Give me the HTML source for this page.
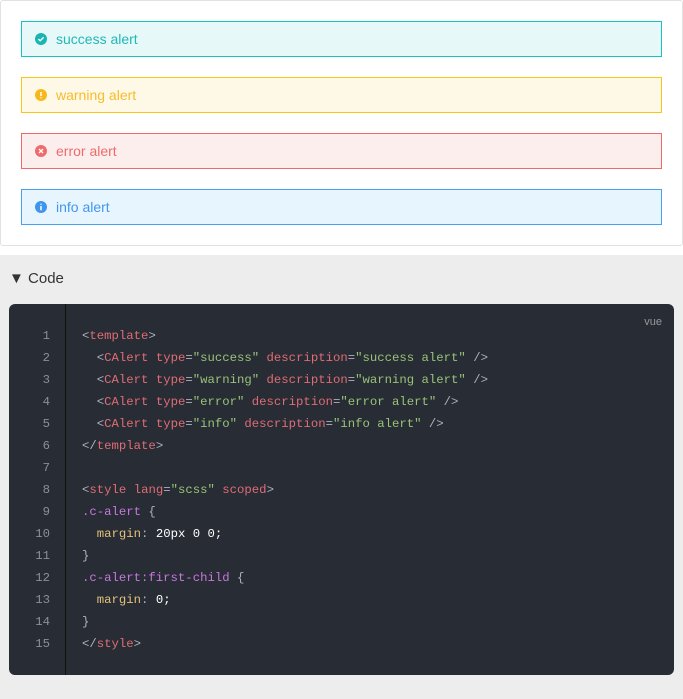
<!DOCTYPE html>
<html><head><meta charset="utf-8"><style>
*{box-sizing:border-box;margin:0;padding:0}
body{width:683px;height:699px;background:#fff;font-family:"Liberation Sans",sans-serif;overflow:hidden;position:relative}
.demo{position:absolute;left:0;top:0;width:683px;height:246px;border:1px solid #e2e2e2;border-radius:3px;background:#fff}
.al{position:absolute;left:20px;width:641px;height:36px;border:1px solid;font-size:14px;line-height:34px;padding-left:34px}
.al svg{position:absolute;left:13px;top:11px}
.gray{position:absolute;left:0;top:255px;width:683px;height:444px;background:#ededed}
.sum{position:absolute;left:9px;top:270px;font-size:15px;color:#333}
.code{position:absolute;left:9px;top:304px;width:665px;height:371px;background:#282c34;border-radius:6px}
.gut{position:absolute;left:56px;top:0;width:1px;height:371px;background:#111}
.ln{position:absolute;left:0;width:41px;top:21px;text-align:right;font-family:"Liberation Mono",monospace;font-size:12.3px;line-height:22px;color:#8a8f98}
pre{position:absolute;left:73px;top:21px;font-family:"Liberation Mono",monospace;font-size:12.3px;line-height:22px;color:#abb2bf}
.r{color:#e06c75}.g{color:#98c379}.p{color:#c678dd}.y{color:#e5c07b}.w{color:#fff}
.vue{position:absolute;right:12px;top:12px;font-size:11px;color:#999}
</style></head><body>
<div class="demo">
<div class="al" style="top:20px;border-color:#19c2c2;background:#e6f8f8;color:#22b8b8"><svg width="12" height="12" viewBox="0 0 12 12"><circle cx="6" cy="6" r="6" fill="#19b5b5"/><path d="M3.4 6.1l1.8 1.7 3.4-3.4" stroke="#fff" stroke-width="1.4" fill="none"/></svg>success alert</div>
<div class="al" style="top:76px;border-color:#f8c51b;background:#fef9e7;color:#f8bb2a"><svg width="12" height="12" viewBox="0 0 12 12"><circle cx="6" cy="6" r="6" fill="#f8b81b"/><path d="M6 3v4M6 8.3v1" stroke="#fff" stroke-width="1.5"/></svg>warning alert</div>
<div class="al" style="top:132px;border-color:#ef6b6b;background:#fdeeee;color:#ef6b6b"><svg width="12" height="12" viewBox="0 0 12 12"><circle cx="6" cy="6" r="6" fill="#ef6b6b"/><path d="M4 4l4 4M8 4l-4 4" stroke="#fff" stroke-width="1.3"/></svg>error alert</div>
<div class="al" style="top:188px;border-color:#47a0f0;background:#e6f5fe;color:#4496ee"><svg width="12" height="12" viewBox="0 0 12 12"><circle cx="6" cy="6" r="6" fill="#3f94ee"/><path d="M6 5v4.2M6 2.8v1" stroke="#fff" stroke-width="1.5"/></svg>info alert</div>
</div>
<div class="gray"></div>
<div class="sum">▼ Code</div>
<div class="code">
<div class="vue">vue</div>
<div class="gut"></div>
<div class="ln">1<br>2<br>3<br>4<br>5<br>6<br>7<br>8<br>9<br>10<br>11<br>12<br>13<br>14<br>15</div>
<pre>&lt;<span class="r">template</span>&gt;
  &lt;<span class="r">CAlert</span> <span class="r">type</span>=<span class="g">"success"</span> <span class="r">description</span>=<span class="g">"success alert"</span> /&gt;
  &lt;<span class="r">CAlert</span> <span class="r">type</span>=<span class="g">"warning"</span> <span class="r">description</span>=<span class="g">"warning alert"</span> /&gt;
  &lt;<span class="r">CAlert</span> <span class="r">type</span>=<span class="g">"error"</span> <span class="r">description</span>=<span class="g">"error alert"</span> /&gt;
  &lt;<span class="r">CAlert</span> <span class="r">type</span>=<span class="g">"info"</span> <span class="r">description</span>=<span class="g">"info alert"</span> /&gt;
&lt;/<span class="r">template</span>&gt;

&lt;<span class="r">style</span> <span class="r">lang</span>=<span class="g">"scss"</span> <span class="r">scoped</span>&gt;
<span class="p">.c-alert</span> {
  <span class="y">margin</span>: <span class="w">20px 0 0;</span>
}
<span class="p">.c-alert:first-child</span> {
  <span class="y">margin</span>: <span class="w">0;</span>
}
&lt;/<span class="r">style</span>&gt;</pre>
</div>
</body></html>
